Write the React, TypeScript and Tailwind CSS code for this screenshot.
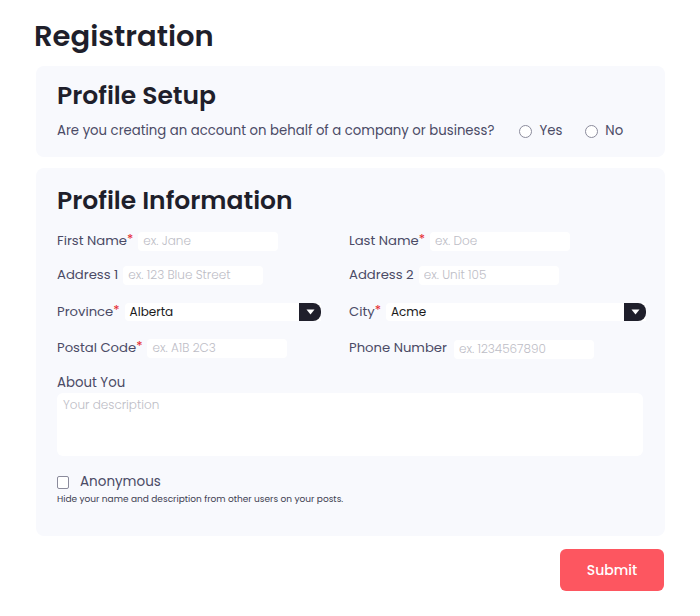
import React from 'react';

const font = { fontFamily: 'Poppins, Inter, "Noto Sans", sans-serif' };

const Star = () => <span className="text-[#e5262b] text-[13px] leading-none relative -top-[2px]">*</span>;

const TextInput: React.FC<{ placeholder: string }> = ({ placeholder }) => (
  <input
    placeholder={placeholder}
    className="w-[140px] h-[19px] bg-white rounded-[4px] px-[5px] text-[12px] font-light text-[#333] placeholder:text-[#bdbdc6] outline-none"
  />
);

const Select: React.FC<{ value: string }> = ({ value }) => (
  <div className="flex-1 flex items-center h-[18px] bg-white rounded-l-[4px]">
    <span className="flex-1 pl-[5px] text-[12px] text-[#1a1a1a]">{value}</span>
    <div className="w-[22px] h-[18px] bg-[#1f1f2b] rounded-r-[8px] flex items-center justify-center">
      <svg width="9" height="6" viewBox="0 0 9 6">
        <path d="M0.5 0.5 L8.5 0.5 L4.5 5.5 Z" fill="#fff" />
      </svg>
    </div>
  </div>
);

const Field: React.FC<{ label: string; required?: boolean; children: React.ReactNode }> = ({ label, required, children }) => (
  <div className="flex items-center h-[20px] gap-[5px]">
    <span className="text-[13.2px] text-[#4b4b66] whitespace-nowrap">
      {label}
      {required && <Star />}
    </span>
    {children}
  </div>
);

const Radio: React.FC<{ label: string }> = ({ label }) => (
  <label className="flex items-center gap-[7px]">
    <span className="w-[13px] h-[13px] rounded-full border border-[#8b8b9c] bg-white" />
    <span className="text-[13.3px] text-[#4b4b66]">{label}</span>
  </label>
);

const App: React.FC = () => {
  return (
    <div className="w-[700px] h-[616px] bg-white" style={font}>
      <div className="pl-[34px] pt-[18px]">
        <h1 className="text-[29px] leading-[36px] font-semibold text-[#1f1f2b]">Registration</h1>
      </div>

      <div className="ml-[36px] mt-[12px] w-[629px] bg-[#f8f9fd] rounded-[8px] pl-[21px] pt-[14px] pb-[16px]">
        <h2 className="text-[25px] leading-[32px] font-semibold text-[#1f1f2b]">Profile Setup</h2>
        <div className="mt-[9px] flex items-center h-[20px]">
          <span className="text-[13.25px] text-[#4b4b66]">Are you creating an account on behalf of a company or business?</span>
          <div className="ml-[25px] flex items-center gap-[23px]">
            <Radio label="Yes" />
            <Radio label="No" />
          </div>
        </div>
      </div>

      <div className="ml-[36px] mt-[11px] w-[629px] bg-[#f8f9fd] rounded-[8px] pl-[21px] pr-[22px] pt-[17px] pb-[30px]">
        <h2 className="text-[25px] leading-[32px] font-semibold text-[#1f1f2b]">Profile Information</h2>

        <div className="mt-[14px] grid grid-cols-[264px_297px] gap-x-[28px]">
          <Field label="First Name" required>
            <TextInput placeholder="ex. Jane" />
          </Field>
          <Field label="Last Name" required>
            <TextInput placeholder="ex. Doe" />
          </Field>
        </div>

        <div className="mt-[14px] grid grid-cols-[264px_297px] gap-x-[28px]">
          <Field label="Address 1">
            <TextInput placeholder="ex. 123 Blue Street" />
          </Field>
          <Field label="Address 2">
            <TextInput placeholder="ex. Unit 105" />
          </Field>
        </div>

        <div className="mt-[17px] grid grid-cols-[264px_297px] gap-x-[28px]">
          <Field label="Province" required>
            <Select value="Alberta" />
          </Field>
          <Field label="City" required>
            <Select value="Acme" />
          </Field>
        </div>

        <div className="mt-[16px] grid grid-cols-[264px_297px] gap-x-[28px]">
          <Field label="Postal Code" required>
            <TextInput placeholder="ex. A1B 2C3" />
          </Field>
          <Field label="Phone Number">
            <div className="ml-[2px]">
              <TextInput placeholder="ex. 1234567890" />
            </div>
          </Field>
        </div>

        <div className="mt-[15px] text-[13.3px] leading-[20px] text-[#4b4b66]">About You</div>
        <textarea
          placeholder="Your description"
          className="block w-[586px] h-[63px] bg-white rounded-[6px] px-[6px] py-[3px] text-[12px] font-light placeholder:text-[#bdbdc6] outline-none resize-none"
        />

        <div className="mt-[16px] flex items-center h-[20px] gap-[11px]">
          <span className="w-[12px] h-[13px] rounded-[2px] border border-[#8b8b9c] bg-white" />
          <span className="text-[13.5px] text-[#4b4b66]">Anonymous</span>
        </div>
        <div className="text-[9px] leading-[14px] text-[#3e3e52]">Hide your name and description from other users on your posts.</div>
      </div>

      <div className="flex justify-end pr-[36px] mt-[13px]">
        <button className="w-[104px] h-[42px] rounded-[6px] bg-[#fd5660] text-white text-[14px] font-medium">Submit</button>
      </div>
    </div>
  );
};

export default App;
